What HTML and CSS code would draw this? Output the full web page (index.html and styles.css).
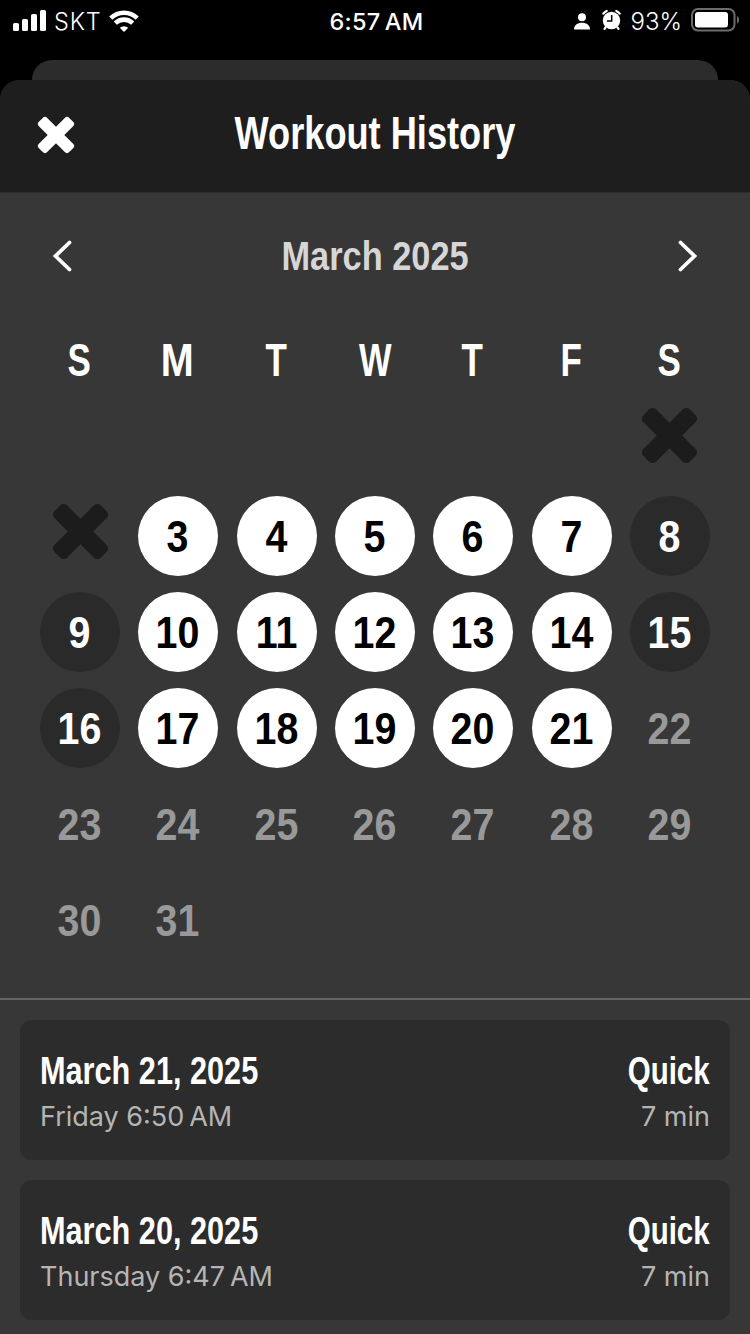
FILE: index.html
```html
<!DOCTYPE html>
<html lang="en">
<head>
<meta charset="utf-8">
<title>Workout History</title>
<link rel="stylesheet" href="styles.css">
</head>
<body>
<svg class="defs" aria-hidden="true">
  <symbol id="cross" viewBox="0 0 55 55" overflow="visible">
    <g transform="rotate(45 27.500 27.500)">
      <rect x="-5.300" y="18.500" width="65.600" height="18" rx="4.800"/>
      <rect x="18.500" y="-5.300" width="18" height="65.600" rx="4.800"/>
    </g>
  </symbol>
</svg>
<div class="status">
  <div class="status-left">
    <svg class="signal" viewBox="0 0 33 21"><rect x="0" y="13" width="6" height="8" rx="1.600"/><rect x="9" y="9" width="6" height="12" rx="1.600"/><rect x="18" y="4" width="6" height="17" rx="1.600"/><rect x="27" y="0" width="6" height="21" rx="1.600"/></svg>
    <span class="carrier">SKT</span>
    <svg class="wifi" viewBox="0 0 30 22"><path d="M1.800 8.200a18.800 18.800 0 0 1 26.400 0M6.300 13.200a12.400 12.400 0 0 1 17.400 0"/><path class="dot" d="M15 22l-4.200-4.200a6.200 6.200 0 0 1 8.400 0z"/></svg>
  </div>
  <span class="time">6:57&#8239;AM</span>
  <div class="status-right">
    <svg class="person" viewBox="0 0 16 17"><circle cx="8" cy="4.200" r="4"/><path d="M0 16.500c0-4.600 3.400-6.800 8-6.800s8 2.200 8 6.800z"/></svg>
    <svg class="alarm" viewBox="0 0 19 20"><circle cx="9.500" cy="10.500" r="8.700"/><path class="ear" d="M1.300 3.600a9 9 0 0 1 3.400-2.600M17.700 3.600a9 9 0 0 0-3.400-2.600M3.500 17.500l-1 1.400M15.500 17.500l1 1.400"/><path class="hand" d="M9.700 5v6H5"/></svg>
    <span class="percent">93%</span>
    <svg class="battery" viewBox="0 0 49 24"><rect class="shell" x="1" y="1" width="42.500" height="21.500" rx="6"/><rect x="4" y="4" width="33" height="15.500" rx="3"/><path class="knob" d="M46 8c2.700 1 2.700 6.500 0 7.500z"/></svg>
  </div>
</div>
<div class="back-sheet"></div>
<main class="sheet">
  <header class="header">
    <svg class="close"><use href="#cross"/></svg>
    <h1 class="title narrow">Workout History</h1>
  </header>
  <section class="calendar">
    <div class="month">
      <svg class="arrow" viewBox="0 0 20 34"><path d="M17.500 3.500L3.500 17L17.500 30.500"/></svg>
      <h2 class="month-name narrow">March 2025</h2>
      <svg class="arrow" viewBox="0 0 20 34"><path d="M2.500 3.500L16.500 17L2.500 30.500"/></svg>
    </div>
    <div class="grid weekdays">
      <span class="narrow">S</span><span class="narrow wide-m">M</span><span class="narrow">T</span><span class="narrow wide-w">W</span><span class="narrow">T</span><span class="narrow">F</span><span class="narrow">S</span>
    </div>
    <div class="grid days">
      <div class="missed first"><svg><use href="#cross"/></svg></div>
      <div class="missed"><svg><use href="#cross"/></svg></div>
      <div class="day done"><span>3</span></div><div class="day done"><span>4</span></div><div class="day done"><span>5</span></div><div class="day done"><span>6</span></div><div class="day done"><span>7</span></div><div class="day rest"><span>8</span></div>
      <div class="day rest"><span>9</span></div><div class="day done"><span>10</span></div><div class="day done"><span>11</span></div><div class="day done"><span>12</span></div><div class="day done"><span>13</span></div><div class="day done"><span>14</span></div><div class="day rest"><span>15</span></div>
      <div class="day rest"><span>16</span></div><div class="day done"><span>17</span></div><div class="day done"><span>18</span></div><div class="day done"><span>19</span></div><div class="day done"><span>20</span></div><div class="day done"><span>21</span></div><div class="day"><span>22</span></div>
      <div class="day"><span>23</span></div><div class="day"><span>24</span></div><div class="day"><span>25</span></div><div class="day"><span>26</span></div><div class="day"><span>27</span></div><div class="day"><span>28</span></div><div class="day"><span>29</span></div>
      <div class="day"><span>30</span></div><div class="day"><span>31</span></div>
    </div>
  </section>
  <section class="log">
    <article class="card">
      <div class="row strong"><span class="date">March 21, 2025</span><span class="kind">Quick</span></div>
      <div class="row"><span>Friday 6:50&#8239;AM</span><span>7 min</span></div>
    </article>
    <article class="card">
      <div class="row strong"><span class="date">March 20, 2025</span><span class="kind">Quick</span></div>
      <div class="row"><span>Thursday 6:47&#8239;AM</span><span>7 min</span></div>
    </article>
  </section>
</main>
</body>
</html>
```

FILE: styles.css
```css
* { box-sizing: border-box; }
body {
  margin: 0;
  width: 750px;
  height: 1334px;
  overflow: hidden;
  background: #000;
  color: #fff;
  font-family: "Liberation Sans", Arial, sans-serif;
  display: flex;
  flex-direction: column;
}
svg { display: block; fill: currentColor; flex: none; overflow: visible; }
h1, h2 { margin: 0; }
.defs { width: 0; height: 0; position: absolute; }

.status {
  height: 60px;
  padding: 0 10px 19px 13px;
  display: grid;
  grid-template-columns: 1fr auto 1fr;
  align-items: center;
  font: 400 23px/41px Inter, sans-serif;
  flex: none;
}
.status-left, .status-right { display: flex; align-items: center; height: 41px; }
.status-right { justify-content: flex-end; }
.signal { width: 33px; height: 21px; margin-right: 8px; margin-top: -2px; }
.carrier { font-weight: 300; font-size: 23.500px; letter-spacing: .8px; }
.wifi { width: 30px; height: 22px; margin-left: 8px; margin-top: -1px; }
.wifi path { fill: none; stroke: #fff; stroke-width: 4.600; }
.wifi .dot { fill: #fff; stroke: none; }
.time { font-weight: 500; font-size: 23.500px; letter-spacing: .3px; padding-top: 1px; }
.person { width: 16px; height: 17px; }
.alarm { width: 19px; height: 20px; margin: -2px 10px 0 12px; }
.alarm .ear { fill: none; stroke: #fff; stroke-width: 2.200; stroke-linecap: round; }
.alarm .hand { fill: none; stroke: #000; stroke-width: 1.500; }
.percent { font-size: 24px; font-weight: 300; margin-right: 9px; padding-top: 1px; }
.battery { width: 49px; height: 24px; margin-top: -2px; }
.battery .shell { fill: none; stroke: #6c6c6c; stroke-width: 2; }
.battery .knob { fill: #6c6c6c; }

.back-sheet {
  flex: none;
  height: 20px;
  margin: 0 32px;
  background: #2c2c2c;
  border-radius: 20px 20px 0 0;
}
.sheet {
  flex: 1;
  background: #373737;
  border-radius: 20px 20px 0 0;
  overflow: hidden;
}
.header {
  height: 113px;
  background: #1e1e1e;
  border-bottom: 1px solid #2b2b2b;
  display: grid;
  grid-template-columns: 37px 1fr 37px;
  align-items: center;
  padding: 0 38px 3px;
}
.close { width: 36px; height: 36px; }
.narrow { display: block; text-align: center; white-space: nowrap; font-weight: 700; }
.title { font-size: 46px; line-height: 54px; transform: scaleX(.787); margin-top: -4px; }

.calendar { height: 805px; padding: 33px 31px 0; }
.month {
  display: flex;
  justify-content: space-between;
  align-items: center;
  height: 60px;
  padding: 0 21px;
}
.month-name { font-size: 41.500px; line-height: 60px; color: #d6d6d6; transform: scaleX(.828); }
.arrow { width: 20px; height: 34px; }
.arrow path { fill: none; stroke: #fff; stroke-width: 3.800; stroke-linecap: round; }
.grid { display: grid; grid-template-columns: repeat(7, 98.333px); justify-content: center; }
.weekdays { font-size: 46px; line-height: 54px; margin-top: 47px; }
.weekdays span { transform: translateX(-1px) scaleX(.76); }
.weekdays .wide-m { transform: translateX(-1px) scaleX(.86); }
.weekdays .wide-w { transform: scaleX(.75); }
.days { grid-auto-rows: 96px; margin-top: 5px; }
.missed { display: flex; align-items: center; justify-content: center; padding-bottom: 10px; color: #1c1c1c; }
.missed svg { width: 55px; height: 55px; }
.first { grid-column: 7; }
.day {
  width: 80px;
  height: 80px;
  margin: 8px auto;
  border-radius: 50%;
  color: #999;
  font-size: 45px;
  font-weight: 700;
  line-height: 82px;
  text-align: center;
}
.day span { display: block; transform: translateX(-.5px) scaleX(.875); }
.done { background: #fff; color: #000; }
.rest { background: #2a2a2a; color: #fff; }

.log {
  border-top: 2px solid #646464;
  padding: 20px;
  display: flex;
  flex-direction: column;
  gap: 20px;
}
.card { height: 140px; background: #2c2c2c; border-radius: 12px; padding: 29px 20px; }
.row { display: flex; justify-content: space-between; white-space: nowrap; font: 400 27px/48px Inter, sans-serif; color: #b5b5b5; }
.strong { font: 700 38px/44px "Liberation Sans", Arial, sans-serif; color: #fff; }
.date { transform: scaleX(.807); transform-origin: left; }
.kind { transform: scaleX(.775); transform-origin: right; }
```
